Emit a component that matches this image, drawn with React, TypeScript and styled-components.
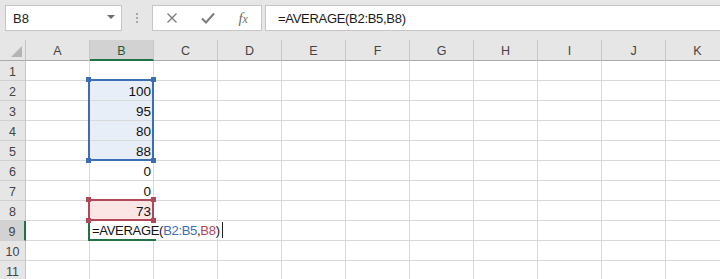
import styled, { createGlobalStyle, css } from "styled-components";

const GlobalStyle = createGlobalStyle`
  body {
    margin: 0;
    background: #ffffff;
    font-family: "Liberation Sans", Arial, sans-serif;
  }
`;

const columns = ["A", "B", "C", "D", "E", "F", "G", "H", "I", "J", "K"];
const values: Record<number, string> = { 2: "100", 3: "95", 4: "80", 5: "88", 6: "0", 7: "0", 8: "73" };

export default function App() {
  return (
    <>
      <GlobalStyle />
      <Window>
        <FormulaBar>
          <NameBox>
            <span>B8</span>
            <Caret />
          </NameBox>
          <Grip>
            <Dot />
            <Dot />
            <Dot />
          </Grip>
          <ActionBox>
            <ActionButton>
              <svg width="12" height="12" viewBox="0 0 12 12">
                <path d="M1.5 1.5 L10.5 10.5 M10.5 1.5 L1.5 10.5" stroke="#7b7b7b" strokeWidth="1.4" fill="none" />
              </svg>
            </ActionButton>
            <ActionButton>
              <svg width="14" height="12" viewBox="0 0 14 12">
                <path d="M1 6.5 L5 10.5 L13 1.5" stroke="#7b7b7b" strokeWidth="2" fill="none" />
              </svg>
            </ActionButton>
            <ActionButton>
              <Fx>
                f<sub>x</sub>
              </Fx>
            </ActionButton>
          </ActionBox>
          <FormulaInput>=AVERAGE(B2:B5,B8)</FormulaInput>
        </FormulaBar>

        <Sheet>
          <Corner>
            <CornerMark />
          </Corner>
          {columns.map((c) => (
            <ColHeader key={c} $active={c === "B"}>
              {c}
            </ColHeader>
          ))}
          {Array.from({ length: 11 }, (_, i) => i + 1).map((row) => (
            <Row key={row} row={row} />
          ))}

          <RangeBox $color="#3d6db5" $fill="#e8eef8" style={{ top: 39, height: 82 }}>
            <Handle $color="#3d6db5" $x="left" $y="top" />
            <Handle $color="#3d6db5" $x="right" $y="top" />
            <Handle $color="#3d6db5" $x="left" $y="bottom" />
            <Handle $color="#3d6db5" $x="right" $y="bottom" />
          </RangeBox>
          <RangeBox $color="#b0485a" $fill="#fbe5e5" style={{ top: 159, height: 22 }}>
            <Handle $color="#b0485a" $x="left" $y="top" />
            <Handle $color="#b0485a" $x="right" $y="top" />
            <Handle $color="#b0485a" $x="left" $y="bottom" />
            <Handle $color="#b0485a" $x="right" $y="bottom" />
          </RangeBox>
          <EditCell>
            <Handle $color="#217346" $x="right" $y="bottom" />
          </EditCell>
          <EditText>
            =AVERAGE(<Ref $color="#3d6db5">B2:B5</Ref>,<Ref $color="#b0485a">B8</Ref>)
            <Cursor />
          </EditText>
        </Sheet>
      </Window>
    </>
  );
}

function Row({ row }: { row: number }) {
  return (
    <>
      <RowHeader $active={row === 9}>{row}</RowHeader>
      {columns.map((c) => (
        <Cell key={c}>{c === "B" ? values[row] : null}</Cell>
      ))}
    </>
  );
}

const Window = styled.div`
  width: 720px;
  height: 279px;
  overflow: hidden;
  background: #ffffff;
`;

const FormulaBar = styled.div`
  height: 40px;
  box-sizing: border-box;
  background: #e6e6e6;
  display: flex;
  align-items: flex-start;
  padding: 5px 0 0 5px;
`;

const boxBase = css`
  box-sizing: border-box;
  height: 26px;
  background: #ffffff;
  border: 1px solid #c6c6c6;
  display: flex;
  align-items: center;
`;

const NameBox = styled.div`
  ${boxBase};
  width: 117px;
  padding: 0 6px 0 7px;
  justify-content: space-between;
  font-size: 13px;
  color: #222;
`;

const Caret = styled.span`
  width: 0;
  height: 0;
  border-left: 4px solid transparent;
  border-right: 4px solid transparent;
  border-top: 4px solid #6d6d6d;
  margin-top: -3px;
`;

const Grip = styled.div`
  width: 30px;
  height: 26px;
  display: flex;
  flex-direction: column;
  align-items: center;
  justify-content: center;
  gap: 2px;
`;

const Dot = styled.span`
  width: 2px;
  height: 2px;
  background: #a8a8a8;
`;

const ActionBox = styled.div`
  ${boxBase};
  width: 110px;
  padding-left: 1px;
`;

const ActionButton = styled.div`
  width: 36px;
  height: 24px;
  display: flex;
  align-items: center;
  justify-content: center;
`;

const Fx = styled.span`
  font-family: "Liberation Serif", "Times New Roman", serif;
  font-style: italic;
  font-size: 15px;
  color: #6f6f6f;
  sub {
    font-size: 12px;
    vertical-align: 0;
  }
`;

const FormulaInput = styled.div`
  ${boxBase};
  flex: 1;
  margin-left: 3px;
  border-right: none;
  padding-left: 12px;
  font-size: 13px;
  letter-spacing: -0.3px;
  color: #1a1a1a;
`;

const Sheet = styled.div`
  position: relative;
  display: grid;
  grid-template-columns: 26px repeat(11, 64px);
  grid-template-rows: 21px repeat(11, 20px);
  font-size: 13px;
`;

const headerBase = css`
  box-sizing: border-box;
  background: #e6e6e6;
  color: #444;
  font-size: 12.5px;
  display: flex;
  align-items: center;
  justify-content: center;
`;

const Corner = styled.div`
  ${headerBase};
  position: relative;
  border-right: 1px solid #c4c4c4;
  border-bottom: 1px solid #ababab;
`;

const CornerMark = styled.span`
  position: absolute;
  right: 3px;
  bottom: 3px;
  width: 0;
  height: 0;
  border-left: 11px solid transparent;
  border-bottom: 11px solid #b4b4b4;
`;

const ColHeader = styled.div<{ $active?: boolean }>`
  ${headerBase};
  padding-top: 2px;
  border-right: 1px solid #c8c8c8;
  border-bottom: ${(p) => (p.$active ? "2px solid #217346" : "1px solid #ababab")};
  background: ${(p) => (p.$active ? "#d2d2d2" : "#e6e6e6")};
  color: ${(p) => (p.$active ? "#1e5a38" : "#444")};
`;

const RowHeader = styled.div<{ $active?: boolean }>`
  ${headerBase};
  padding-top: 2px;
  border-right: ${(p) => (p.$active ? "2px solid #217346" : "1px solid #c4c4c4")};
  border-bottom: 1px solid #d0d0d0;
  background: ${(p) => (p.$active ? "#d2d2d2" : "#e6e6e6")};
`;

const Cell = styled.div`
  box-sizing: border-box;
  border-right: 1px solid #d9d9d9;
  border-bottom: 1px solid #d9d9d9;
  text-align: right;
  padding: 1px 2px 0 0;
  line-height: 19px;
  font-size: 13.5px;
  color: #111;
  position: relative;
  z-index: 1;
`;

/* fill sits under the cells, the outline is drawn above the gridlines */
const RangeBox = styled.div<{ $color: string; $fill: string }>`
  position: absolute;
  left: 88px;
  width: 66px;
  background: ${(p) => p.$fill};

  &::after {
    content: "";
    position: absolute;
    inset: 0;
    border: 2px solid ${(p) => p.$color};
    z-index: 2;
  }
`;

const Handle = styled.span<{ $color: string; $x: "left" | "right"; $y: "top" | "bottom" }>`
  position: absolute;
  width: 5px;
  height: 5px;
  background: ${(p) => p.$color};
  ${(p) => p.$x}: -2px;
  ${(p) => p.$y}: -2px;
  z-index: 3;
`;

const EditCell = styled.div`
  position: absolute;
  left: 88px;
  top: 180px;
  width: 66px;
  height: 21px;
  box-sizing: border-box;
  border-left: 2px solid #217346;
  border-bottom: 2px solid #217346;
  z-index: 2;
`;

const EditText = styled.div`
  position: absolute;
  left: 90px;
  top: 181px;
  height: 18px;
  display: flex;
  align-items: center;
  padding: 0 1px 0 2px;
  background: #ffffff;
  font-size: 13px;
  letter-spacing: -0.3px;
  color: #111;
  white-space: pre;
  z-index: 2;
`;

const Ref = styled.span<{ $color: string }>`
  color: ${(p) => p.$color};
`;

const Cursor = styled.span`
  display: inline-block;
  width: 1px;
  height: 16px;
  margin-left: 2px;
  background: #222;
`;
